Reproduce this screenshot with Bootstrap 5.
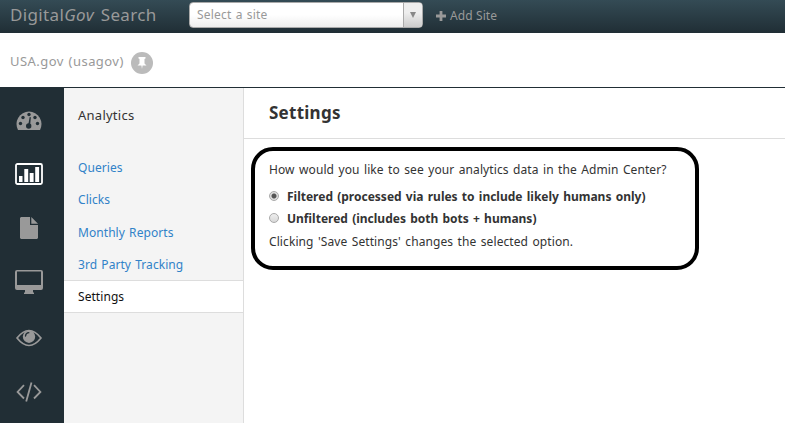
<!DOCTYPE html>
<html lang="en">
<head>
<meta charset="utf-8">
<meta name="viewport" content="width=device-width, initial-scale=1">
<title>Settings</title>
<link rel="stylesheet" href="https://cdn.jsdelivr.net/npm/bootstrap@5.3.0/dist/css/bootstrap.min.css">
<style>
body{font-family:"Noto Sans","Open Sans",sans-serif;font-size:12px;line-height:20px;color:#333;background:#fff;height:423px;overflow:hidden}
.topbar{height:33px;background:linear-gradient(#344b55,#202e35);color:#999}
.brand{width:181px;flex:none;font-size:17px;line-height:30px;letter-spacing:.35px;word-spacing:2px;color:#999}
.site-picker{width:234px;height:26px;margin-top:2px;border:1px solid #aaa;border-radius:4px;background:linear-gradient(#fff 50%,#eee);color:#999;line-height:24px;padding-left:7px;overflow:hidden;letter-spacing:.2px;word-spacing:.8px}
.site-picker .arrow{width:19px;border-left:1px solid #aaa;background:linear-gradient(#eee 40%,#ccc)}
.add-site{margin-left:13px;line-height:30px;height:31px;color:#999;gap:4px;letter-spacing:.1px}
.sitebar{height:54px;color:#999;padding:0 10px;font-size:13px}
.site-name{line-height:57px;letter-spacing:.45px;word-spacing:1px}
.pin{width:22px;height:22px;border-radius:50%;background:#bbb;margin:19px 0 0 7px}
.rail{width:64px;background:#212e35;color:#999;padding:5px 7px 0 0;margin-top:-1px;border-top:1px solid #212e35}
.rail a{height:54px;flex:none;color:#999}
.rail a.active{color:#fff}
.main{height:336px;border-top:1px solid #212e35}
.subnav{width:180px;background:#f4f4f4;border-right:1px solid #ddd}
.subnav h2{font-size:13px;font-weight:400;line-height:20px;margin:17px 0 27px 14px;color:#333;letter-spacing:.25px}
.subnav a{height:32px;line-height:32px;padding:0 14px;color:#3182c8;text-decoration:none;display:block;letter-spacing:.06px;word-spacing:1px}
.subnav a.lower{line-height:34px}
.subnav a.active{height:33px;line-height:31px;background:#fff;color:#111;border-top:1px solid #ddd;border-bottom:1px solid #ddd}
.page-head{height:51px;border-bottom:1px solid #ddd;padding-left:25px}
.page-head h1{font-size:17px;font-weight:700;line-height:50px;margin:0;color:#333;letter-spacing:.25px}
.panel{width:448px;height:123px;margin:8px 0 0 7px;border:4px solid #000;border-radius:22px;padding:9px 0 0 14px;white-space:nowrap;letter-spacing:.09px;word-spacing:1.2px}
.option{height:22px;line-height:22px;font-weight:700;letter-spacing:0;word-spacing:1.1px}
.option:first-of-type{margin-top:5px}
.option span{padding-top:2px}
.option input{appearance:none;width:10px;height:10px;border:1px solid #aaa;border-radius:50%;background:linear-gradient(#eee,#d8d8d8);margin:0 8px 1px 0}
.option input:checked{background:radial-gradient(circle,#555 0 2px,#ddd 3px)}
.note{margin-top:3px}
</style>
<script src="https://cdn.jsdelivr.net/npm/bootstrap@5.3.0/dist/js/bootstrap.bundle.min.js"></script>
</head>
<body>
<header class="topbar d-flex ps-2">
  <a class="brand text-decoration-none" href="#">&#8202;Digital<em>Gov</em> Search</a>
  <div class="site-picker d-flex justify-content-between"><span>Select a site</span><span class="arrow d-flex align-items-center justify-content-center"><svg width="6" height="6" viewBox="0 0 6 6"><path d="M0 0h6L3 6z" fill="#888"/></svg></span></div>
  <a class="add-site d-flex align-items-center text-decoration-none" href="#"><svg width="10" height="10" viewBox="0 0 10 10"><path d="M3.6 0h2.8v3.6H10v2.8H6.4V10H3.6V6.4H0V3.6h3.6z" fill="#999"/></svg><span>Add Site</span></a>
</header>
<div class="sitebar d-flex"><span class="site-name">USA.gov (usagov)</span><span class="pin d-flex align-items-center justify-content-center"><svg width="10" height="14" viewBox="0 0 10 14"><path d="M1.500 1h7v1.500l-1 .5v4.500l2 2H5.600L5 13l-.6-3.500H.5l2-2V3l-1-.5z" fill="#fff"/></svg></span></div>
<main class="main d-flex">
  <nav class="rail d-flex flex-column">
    <a class="d-flex align-items-center justify-content-center" href="#" aria-label="Dashboard"><svg width="26" height="20" viewBox="0 0 26 20"><path d="M2 20A12.500 12.500 0 1 1 24 20z" fill="currentColor"/><g fill="#212e35"><circle cx="4.500" cy="13.500" r="1.700"/><circle cx="7" cy="7.500" r="1.700"/><circle cx="13" cy="4.500" r="1.700"/><circle cx="19" cy="7.500" r="1.700"/><circle cx="21.500" cy="13.500" r="1.700"/><circle cx="12.700" cy="16" r="2.700"/><path d="M12 16l1.700-9 1.200.3L14 16z"/></g></svg></a>
    <a class="active d-flex align-items-center justify-content-center" href="#" aria-label="Analytics"><svg width="28" height="22" viewBox="0 0 28 22"><rect x="1" y="1" width="26" height="20" rx="1.5" fill="none" stroke="currentColor" stroke-width="1.8"/><path d="M4 13h3.500v6H4zM9.300 6h3.900v13H9.300zM14.700 10h3.900v9h-3.900zM20.200 4h3.900v15h-3.900z" fill="currentColor"/></svg></a>
    <a class="d-flex align-items-center justify-content-center" href="#" aria-label="Content"><svg width="18" height="22" viewBox="0 0 18 22"><path d="M1 0h9v8h8v13l-1 1H1l-1-1V1zM11.300 0L18 6.700h-6.700z" fill="currentColor"/></svg></a>
    <a class="d-flex align-items-center justify-content-center" href="#" aria-label="Display"><svg width="28" height="24" viewBox="0 0 28 24"><path fill-rule="evenodd" d="M2 0h24q2 0 2 2v16q0 2-2 2h-8v2l1 1v1H9v-1l1-1v-2H2q-2 0-2-2V2q0-2 2-2zM2 1.500v13.500h24v-13.500z" fill="currentColor"/></svg></a>
    <a class="d-flex align-items-center justify-content-center pt-1" href="#" aria-label="Preview"><svg width="26" height="18" viewBox="0 0 26 18"><path d="M1 9Q13-6 25 9 13 24 1 9z" fill="none" stroke="currentColor" stroke-width="1.7"/><circle cx="13" cy="7.700" r="6.200" fill="currentColor"/><path d="M9.500 7Q9.800 4 12.800 3.700" fill="none" stroke="#212e35" stroke-width="1.3" stroke-linecap="round"/></svg></a>
    <a class="d-flex align-items-center justify-content-center pt-1" href="#" aria-label="Code"><svg width="26" height="20" viewBox="0 0 26 20"><path d="M8 3.200L1.600 10 8 16.500M18 3.200l6.400 6.800-6.400 6.500M15.500.5l-5.300 19" fill="none" stroke="currentColor" stroke-width="1.8"/></svg></a>
  </nav>
  <nav class="subnav">
    <h2>Analytics</h2>
    <a href="#">Queries</a>
    <a href="#">Clicks</a>
    <a class="lower" href="#">Monthly Reports</a>
    <a class="lower" href="#">3rd Party Tracking</a>
    <a class="active" href="#">Settings</a>
  </nav>
  <section class="flex-grow-1">
    <div class="page-head"><h1>Settings</h1></div>
    <form class="panel">
      <div>How would you like to see your analytics data in the Admin Center?</div>
      <label class="option d-flex align-items-center"><input type="radio" name="view" checked><span>Filtered (processed via rules to include likely humans only)</span></label>
      <label class="option d-flex align-items-center"><input type="radio" name="view"><span>Unfiltered (includes both bots + humans)</span></label>
      <div class="note">Clicking 'Save Settings' changes the selected option.</div>
    </form>
  </section>
</main>
</body>
</html>
